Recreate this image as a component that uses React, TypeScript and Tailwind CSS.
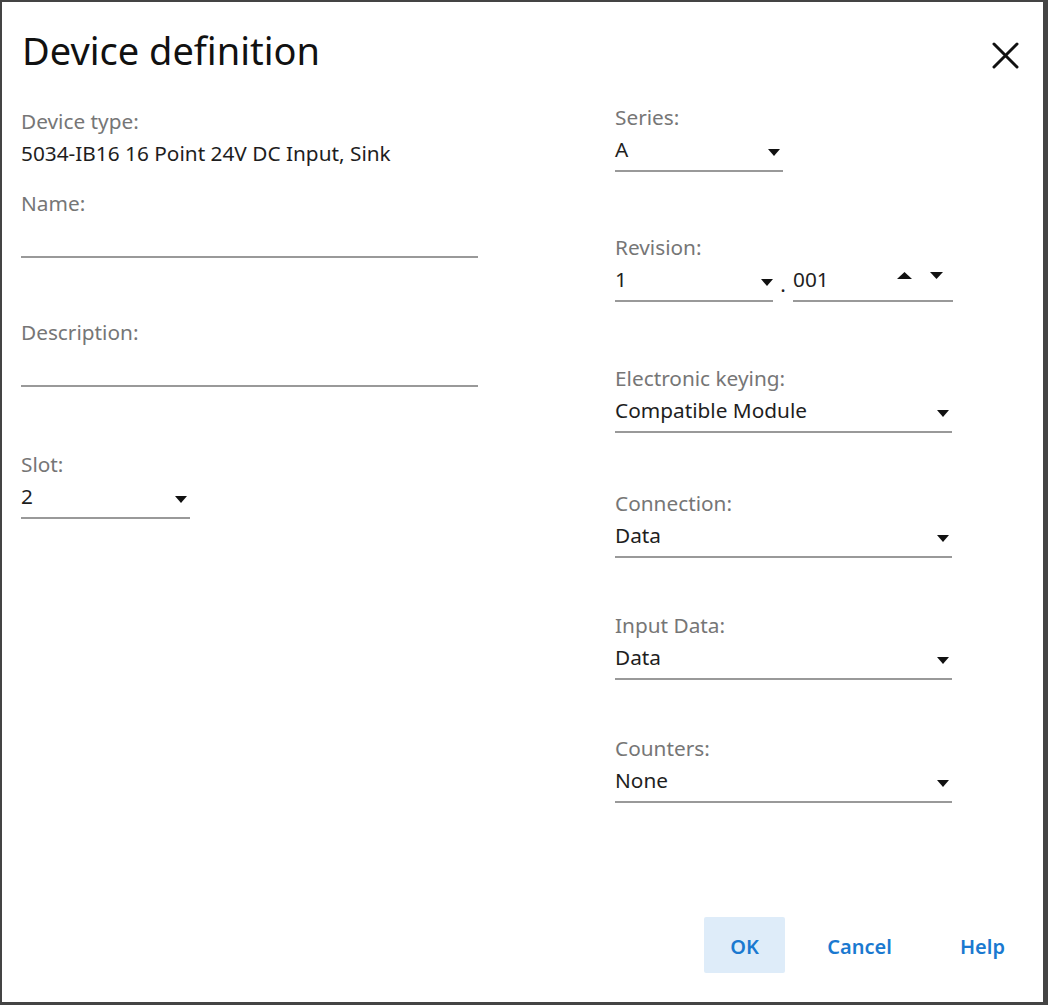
import React from "react";

const FONT = "font-['Noto_Sans','Open_Sans',sans-serif]";

function Arrow({ up = false }: { up?: boolean }) {
  return (
    <svg width="12" height="7" viewBox="0 0 12 7" className="block">
      {up ? <polygon points="0,7 12,7 6,0" fill="#111" /> : <polygon points="0,0 12,0 6,7" fill="#111" />}
    </svg>
  );
}

function Field({
  label,
  value,
  width,
  className = "",
  arrow = true,
}: {
  label: string;
  value?: string;
  width: string;
  className?: string;
  arrow?: boolean;
}) {
  return (
    <div className={`flex flex-col ${width} ${className}`}>
      <div className="h-[24px] leading-[24px] text-[20.8px] text-[#767676]">{label}</div>
      <div className="mt-[8px] flex items-end justify-between pb-[9px] border-b-2 border-[#999]">
        <span className="h-[24px] leading-[24px] text-[20.8px] text-[#1e1e1e]">{value ?? ""}</span>
        {arrow && (
          <span className="mr-[3px] mb-[5px]">
            <Arrow />
          </span>
        )}
      </div>
    </div>
  );
}

export default function App() {
  return (
    <div
      className={`w-[1048px] h-[1005px] bg-white border-t-2 border-l-2 border-r-[5px] border-b-[3px] border-[#444] flex flex-col ${FONT}`}
    >
      <div className="flex items-start justify-between pl-[20px] pr-[24px] pt-[22px]">
        <h1 className="text-[38px] leading-[52px] text-[#111] font-normal">Device definition</h1>
        <svg width="27" height="27" viewBox="0 0 27 27" className="mt-[18px]">
          <path d="M2 2 L25 25 M25 2 L2 25" stroke="#111" strokeWidth="3" strokeLinecap="round" />
        </svg>
      </div>

      <div className="flex items-start pl-[19px]">
        {/* left column */}
        <div className="flex flex-col w-[457px] mt-[33px]">
          <div className="h-[24px] leading-[24px] text-[20.8px] text-[#767676]">Device type:</div>
          <div className="mt-[8px] h-[24px] leading-[24px] text-[20.8px] text-[#1e1e1e]">
            5034-IB16 16 Point 24V DC Input, Sink
          </div>
          <Field label="Name:" width="w-[457px]" className="mt-[26px]" arrow={false} />
          <Field label="Description:" width="w-[457px]" className="mt-[62px]" arrow={false} />
          <Field label="Slot:" value="2" width="w-[169px]" className="mt-[65px]" />
        </div>

        {/* right column */}
        <div className="flex flex-col ml-[137px] mt-[29px]">
          <Field label="Series:" value="A" width="w-[168px]" />

          <div className="flex flex-col mt-[63px]">
            <div className="h-[24px] leading-[24px] text-[20.8px] text-[#767676]">Revision:</div>
            <div className="mt-[8px] flex items-end">
              <div className="w-[158px] flex items-end justify-between pb-[9px] border-b-2 border-[#999]">
                <span className="h-[24px] leading-[24px] text-[20.8px] text-[#1e1e1e]">1</span>
                <span className="mb-[5px]">
                  <Arrow />
                </span>
              </div>
              <span className="w-[20px] text-center text-[20.8px] leading-[24px] text-[#1e1e1e] mb-[6px]">.</span>
              <div className="w-[160px] flex items-end justify-between pb-[9px] border-b-2 border-[#999]">
                <span className="h-[24px] leading-[24px] text-[20.8px] text-[#1e1e1e]">001</span>
                <span className="flex items-center gap-[18px] mb-[12px] mr-[10px]">
                  <svg width="15" height="7" viewBox="0 0 15 7" className="block">
                    <polygon points="0,7 15,7 7.5,0" fill="#111" />
                  </svg>
                  <svg width="13" height="7" viewBox="0 0 13 7" className="block">
                    <polygon points="0,0 13,0 6.5,7" fill="#111" />
                  </svg>
                </span>
              </div>
            </div>
          </div>

          <Field label="Electronic keying:" value="Compatible Module" width="w-[337px]" className="mt-[64px]" />
          <Field label="Connection:" value="Data" width="w-[337px]" className="mt-[58px]" />
          <Field label="Input Data:" value="Data" width="w-[337px]" className="mt-[55px]" />
          <Field label="Counters:" value="None" width="w-[337px]" className="mt-[56px]" />
        </div>
      </div>

      <div className="mt-auto mb-[29px] flex items-center pl-[702px]">
        <button className="w-[81px] h-[56px] pt-[3px] rounded-[2px] bg-[#deecf9] text-[#1a79d0] text-[20px] font-semibold">
          OK
        </button>
        <button className="ml-[20px] w-[109px] h-[56px] pt-[3px] text-[#1a79d0] text-[20px] font-semibold">
          Cancel
        </button>
        <button className="ml-[20px] w-[97px] h-[56px] pt-[3px] text-[#1a79d0] text-[20px] font-semibold">
          Help
        </button>
      </div>
    </div>
  );
}
